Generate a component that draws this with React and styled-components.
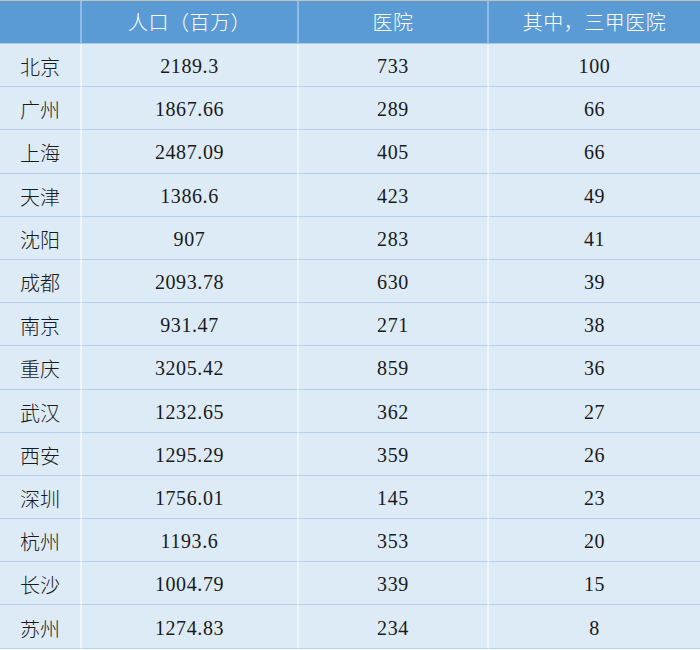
import React from "react";
import styled, { createGlobalStyle } from "styled-components";

const Global = createGlobalStyle`
  html, body { margin: 0; padding: 0; background: #ffffff; }
  body { font-family: "Liberation Serif", "Noto Sans CJK SC", serif; }
`;

const Table = styled.div`
  width: 700px;
  display: grid;
  grid-template-columns: 82px 217px 190px 211px;
  border-top: 1px solid #c6c1ba;
  font-family: "Liberation Serif", "Noto Sans CJK SC", serif;
  font-size: 20px;
  font-weight: 300;
`;

const HeadCell = styled.div`
  height: 43px;
  box-sizing: border-box;
  background: #5b9bd5;
  color: #ffffff;
  display: flex;
  align-items: center;
  justify-content: center;
  border-right: ${(p) => (p.$last ? "none" : "2px solid #8fbbe6")};
  border-bottom: 1px solid #a9cbed;
  padding-bottom: 1px;
  letter-spacing: 0.5px;
`;

const Cell = styled.div`
  height: 43.2px;
  box-sizing: border-box;
  background: #ddebf7;
  color: #1a1a1a;
  display: flex;
  align-items: center;
  justify-content: ${(p) => (p.$left ? "flex-start" : "center")};
  padding-left: ${(p) => (p.$left ? "20px" : "0")};
  padding-top: 3px;
  letter-spacing: ${(p) => (p.$left ? "0" : "0.6px")};
  border-right: ${(p) => (p.$last ? "none" : "2px solid #eef5fb")};
  border-bottom: 1px solid #b3d0ee;
`;

const rows = [
  ["北京", "2189.3", "733", "100"],
  ["广州", "1867.66", "289", "66"],
  ["上海", "2487.09", "405", "66"],
  ["天津", "1386.6", "423", "49"],
  ["沈阳", "907", "283", "41"],
  ["成都", "2093.78", "630", "39"],
  ["南京", "931.47", "271", "38"],
  ["重庆", "3205.42", "859", "36"],
  ["武汉", "1232.65", "362", "27"],
  ["西安", "1295.29", "359", "26"],
  ["深圳", "1756.01", "145", "23"],
  ["杭州", "1193.6", "353", "20"],
  ["长沙", "1004.79", "339", "15"],
  ["苏州", "1274.83", "234", "8"],
];

const headers = ["", "人口（百万）", "医院", "其中，三甲医院"];

export default function App() {
  return (
    <>
      <Global />
      <Table>
        {headers.map((h, i) => (
          <HeadCell key={"h" + i} $last={i === 3}>
            {h}
          </HeadCell>
        ))}
        {rows.map((r) =>
          r.map((v, i) => (
            <Cell key={r[0] + i} $left={i === 0} $last={i === 3}>
              {v}
            </Cell>
          ))
        )}
      </Table>
    </>
  );
}
